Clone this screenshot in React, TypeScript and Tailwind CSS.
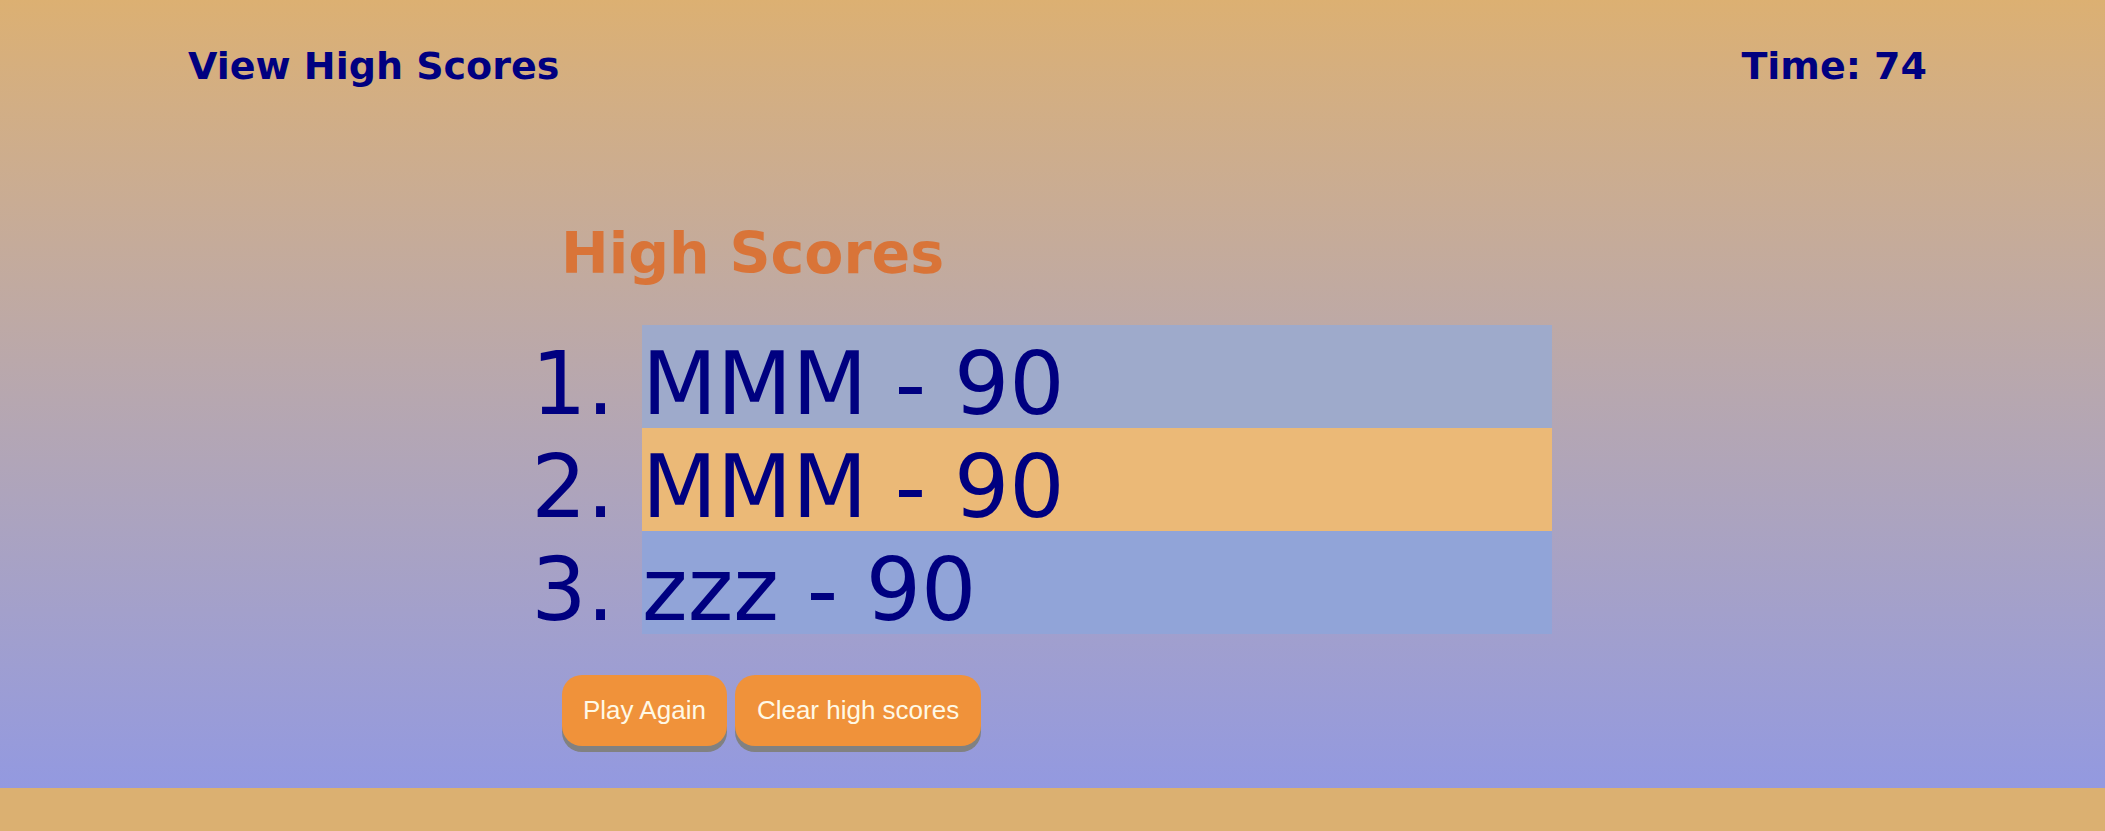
import React from 'react'

const scores = [
  { name: "MMM", score: 90, bg: "bg-[#9eaacb]" },
  { name: "MMM", score: 90, bg: "bg-[#ebb977]" },
  { name: "zzz", score: 90, bg: "bg-[#91a4d8]" },
]

const verdana = "font-['Verdana','DejaVu_Sans',sans-serif]"

const App = () => {
  return (
    <div className="min-h-screen bg-[#dbb071]">
      <div className={`h-[788px] bg-gradient-to-b from-[#dcb072] to-[#9399e0] ${verdana}`}>
        <header className="flex justify-between pl-[188px] pr-[178px] pt-[44px] text-[38px] font-bold leading-[1.2] text-[#000080]">
          <a href="#" className="cursor-pointer">View High Scores</a>
          <span>Time: 74</span>
        </header>

        <main className="mt-[129px] pl-[561px]">
          <h1 className="text-[57px] font-bold leading-[1.2] text-[#d97438]">High Scores</h1>

          <ol className="mt-[38px] -ml-[2px] list-decimal pl-[83px] text-[87px] text-[#000080]">
            {scores.map((s, i) => (
              <li key={i} className={`h-[103px] w-[910px] pt-[15px] leading-[88px] ${s.bg}`}>
                {s.name} - {s.score}
              </li>
            ))}
          </ol>

          <div className="mt-[41px] flex gap-[8px] pl-[1px] font-['Liberation_Sans',Arial,sans-serif]">
            <button className="flex h-[71px] items-center rounded-[20px] bg-[#f0923a] px-[21px] text-[26px] text-[#fff9e6] shadow-[0_6px_0_#818181]">
              Play Again
            </button>
            <button className="flex h-[71px] items-center rounded-[20px] bg-[#f0923a] px-[22px] text-[26px] text-[#fff9e6] shadow-[0_6px_0_#818181]">
              Clear high scores
            </button>
          </div>
        </main>
      </div>
    </div>
  )
}

export default App
